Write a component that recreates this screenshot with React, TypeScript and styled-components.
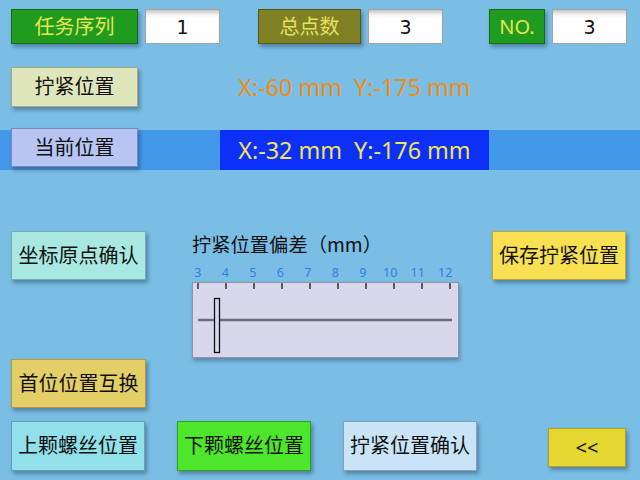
import React from "react";
import styled, { createGlobalStyle } from "styled-components";

const Global = createGlobalStyle`
  html, body { margin: 0; padding: 0; }
  body { background: #7bbee5; font-family: "Noto Sans", "Noto Sans CJK SC", sans-serif; }
`;

const Screen = styled.div`
  width: 640px;
  height: 480px;
  background: #7bbee5;
  display: flex;
  flex-direction: column;
  overflow: hidden;
`;

const TopBar = styled.div`
  display: flex;
  margin-top: 9px;
  height: 35px;
`;

const Btn = styled.div<{
  $bg: string;
  $border: string;
  $fg?: string;
  $w: number;
  $h: number;
  $ml?: number;
  $mt?: number;
}>`
  box-sizing: border-box;
  flex: none;
  width: ${(p) => p.$w}px;
  height: ${(p) => p.$h}px;
  margin-left: ${(p) => p.$ml ?? 0}px;
  margin-top: ${(p) => p.$mt ?? 0}px;
  background: ${(p) => p.$bg};
  border: 1px solid ${(p) => p.$border};
  color: ${(p) => p.$fg ?? "#111"};
  box-shadow: 2px 3px 4px rgba(20, 40, 70, 0.4);
  display: flex;
  align-items: center;
  justify-content: center;
  font-family: "Noto Sans", "Noto Sans CJK SC", sans-serif;
  font-size: 20px;
  line-height: 1;
  white-space: nowrap;
`;

const ValueBox = styled.div<{ $ml: number }>`
  box-sizing: border-box;
  flex: none;
  width: 75px;
  height: 35px;
  margin-left: ${(p) => p.$ml}px;
  background: linear-gradient(#c4c4c4 0px, #f4f4f4 5px, #ffffff 8px);
  border: 1px solid #a2a2a2;
  display: flex;
  align-items: center;
  justify-content: center;
  font-family: "DejaVu Sans", sans-serif;
  font-size: 19px;
  color: #111;
`;

const PosRow = styled.div`
  display: flex;
  margin-top: 23px;
  height: 40px;
`;

const Coord = styled.div<{ $fg: string; $bg?: string }>`
  box-sizing: border-box;
  flex: none;
  width: 269px;
  height: 40px;
  margin-left: 82px;
  background: ${(p) => p.$bg ?? "transparent"};
  color: ${(p) => p.$fg};
  display: flex;
  align-items: center;
  justify-content: center;
  font-family: "Noto Sans", sans-serif;
  font-size: 23.3px;
  white-space: pre;
`;

const Band = styled.div`
  display: flex;
  align-items: flex-start;
  margin-top: 23px;
  height: 40px;
  background: #4398ea;
`;

const Middle = styled.div`
  display: flex;
  align-items: flex-start;
  margin-top: 61px;
  height: 177px;
`;

const SideColumn = styled.div`
  display: flex;
  flex-direction: column;
  justify-content: space-between;
  margin-left: 11px;
  height: 177px;
`;

const Gauge = styled.div`
  display: flex;
  flex-direction: column;
  margin-left: 46px;
  width: 267px;
`;

const GaugeTitle = styled.div`
  height: 26px;
  line-height: 26px;
  font-family: "Noto Sans CJK SC", sans-serif;
  font-size: 19.3px;
  color: #111;
  white-space: nowrap;
`;

const ScaleLabels = styled.div`
  display: flex;
  margin-top: 9px;
  margin-left: -8px;
  height: 14px;
`;

const ScaleLabel = styled.span`
  width: 28px;
  text-align: center;
  font-family: "Noto Sans", sans-serif;
  font-size: 12.5px;
  line-height: 14px;
  color: #2b80e8;
`;

const Panel = styled.div`
  box-sizing: border-box;
  margin-top: 2px;
  width: 267px;
  height: 76px;
  background: #d8d8ea;
  border: 1px solid #9292a4;
  box-shadow: 1px 3px 4px rgba(20, 40, 70, 0.35);
  display: flex;
`;

const BottomRow = styled.div`
  display: flex;
  align-items: flex-start;
  margin-top: 13px;
  height: 50px;
`;

const ticks = [3, 4, 5, 6, 7, 8, 9, 10, 11, 12];

export default function App() {
  return (
    <Screen>
      <Global />
      <TopBar>
        <Btn $bg="#1f9b1f" $border="#166c16" $fg="#e6e652" $w={127} $h={35} $ml={11}>
          任务序列
        </Btn>
        <ValueBox $ml={7}>1</ValueBox>
        <Btn $bg="#808024" $border="#56561a" $fg="#e2e25e" $w={103} $h={35} $ml={38}>
          总点数
        </Btn>
        <ValueBox $ml={7}>3</ValueBox>
        <Btn $bg="#1f9b1f" $border="#166c16" $fg="#e6e652" $w={56} $h={35} $ml={46}>
          NO.
        </Btn>
        <ValueBox $ml={7}>3</ValueBox>
      </TopBar>

      <PosRow>
        <Btn $bg="#e0e6bc" $border="#aaa882" $w={127} $h={40} $ml={11}>
          拧紧位置
        </Btn>
        <Coord $fg="#f28c12">{"X:-60 mm  Y:-175 mm"}</Coord>
      </PosRow>

      <Band>
        <Btn $bg="#b8c4f2" $border="#7c88b6" $w={127} $h={39} $ml={11} $mt={-2}>
          当前位置
        </Btn>
        <Coord $fg="#f2e35a" $bg="#0c30f8">{"X:-32 mm  Y:-176 mm"}</Coord>
      </Band>

      <Middle>
        <SideColumn>
          <Btn $bg="#a8e8e0" $border="#72b0ae" $w={135} $h={49}>
            坐标原点确认
          </Btn>
          <Btn $bg="#e4ce68" $border="#b09a40" $w={135} $h={49}>
            首位位置互换
          </Btn>
        </SideColumn>
        <Gauge>
          <GaugeTitle>拧紧位置偏差（mm）</GaugeTitle>
          <ScaleLabels>
            {ticks.map((t) => (
              <ScaleLabel key={t}>{t}</ScaleLabel>
            ))}
          </ScaleLabels>
          <Panel>
            <svg width="265" height="74" viewBox="0 0 265 74">
              {ticks.map((t, i) => (
                <line
                  key={t}
                  x1={5 + 28 * i}
                  y1={0}
                  x2={5 + 28 * i}
                  y2={6}
                  stroke="#5a5a66"
                  strokeWidth={2}
                />
              ))}
              <line x1={5} y1={37} x2={259} y2={37} stroke="#6c6c76" strokeWidth={2.5} />
              <rect
                x={21.5}
                y={15.5}
                width={5}
                height={54}
                fill="#d8d8ea"
                stroke="#111"
                strokeWidth={1.3}
              />
            </svg>
          </Panel>
        </Gauge>
        <Btn $bg="#f8e052" $border="#c0a832" $w={134} $h={49} $ml={33}>
          保存拧紧位置
        </Btn>
      </Middle>

      <BottomRow>
        <Btn $bg="#92e0ea" $border="#62a0b0" $w={134} $h={50} $ml={11}>
          上颗螺丝位置
        </Btn>
        <Btn $bg="#4ee62a" $border="#30a020" $w={134} $h={50} $ml={32}>
          下颗螺丝位置
        </Btn>
        <Btn $bg="#c8e4f6" $border="#8aa0b8" $w={134} $h={50} $ml={32}>
          拧紧位置确认
        </Btn>
        <Btn $bg="#e6d632" $border="#b0a020" $w={78} $h={39} $ml={71} $mt={7}>
          {"<<"}
        </Btn>
      </BottomRow>
    </Screen>
  );
}
